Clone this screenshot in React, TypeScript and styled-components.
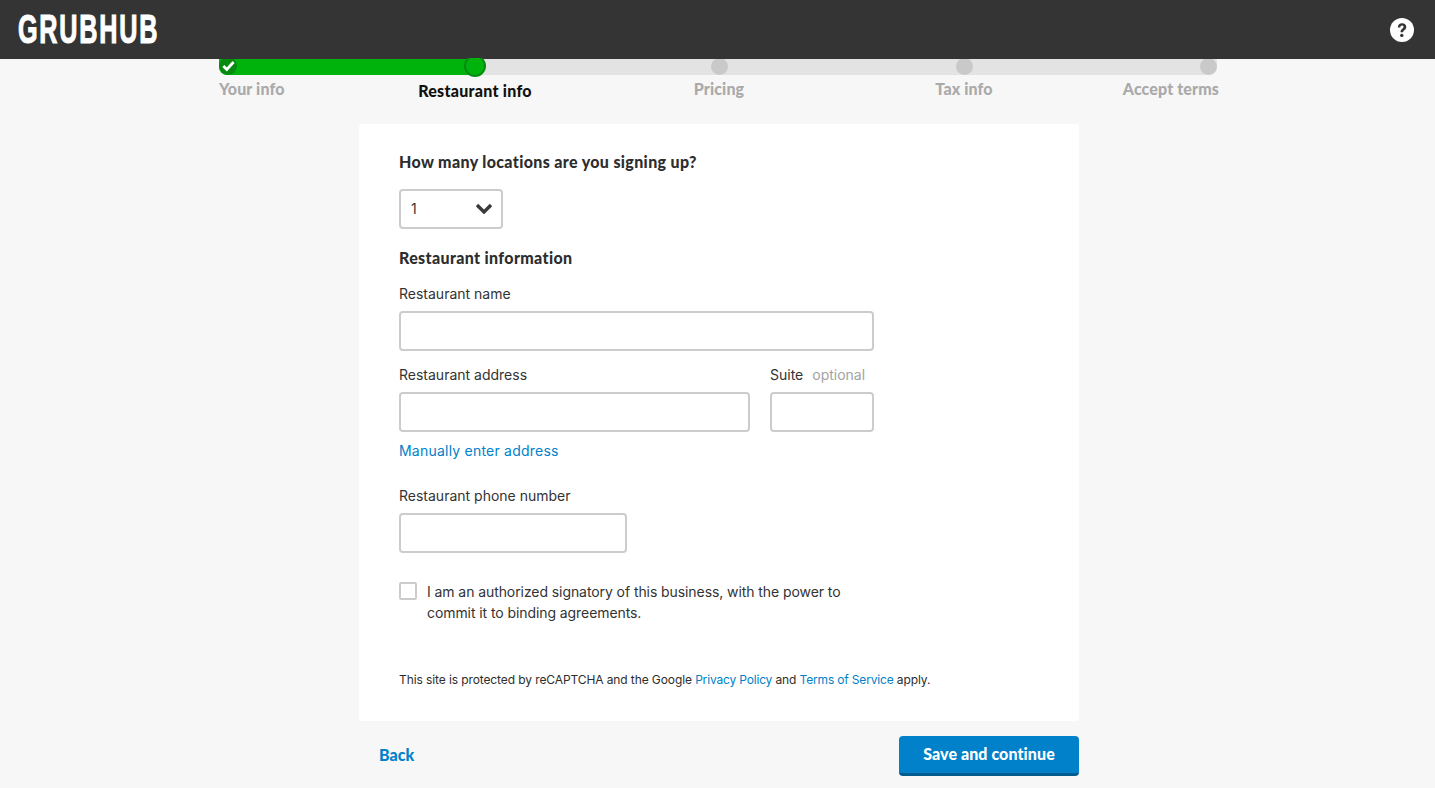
import React from "react";
import styled, { createGlobalStyle } from "styled-components";

const Global = createGlobalStyle`
  html, body { margin: 0; padding: 0; background: #f7f7f7; }
  body { font-family: Inter, "Liberation Sans", sans-serif; color: #333333; overflow: hidden; }
`;

const Page = styled.div`
  height: 788px;
  display: flex;
  flex-direction: column;
  align-items: center;
`;

const Header = styled.header`
  align-self: stretch;
  height: 59px;
  background: #343434;
  display: flex;
  align-items: center;
  justify-content: space-between;
  padding: 0 21px 0 18px;
`;

const Logo = styled.div`
  font-family: "Liberation Sans", sans-serif;
  font-weight: 700;
  font-size: 40px;
  line-height: 59px;
  color: #fff;
  letter-spacing: 2.8px;
  -webkit-text-stroke: 1.1px #fff;
  transform: scaleX(0.63);
  transform-origin: left center;
`;

const Stepper = styled.nav`
  position: relative;
  width: 1000px;
  margin-left: 3px;
  display: grid;
  grid-template-columns: 134px 244px 244px 246px 132px;
  height: 65px;
  &::before {
    content: "";
    position: absolute;
    left: 0;
    top: 0;
    width: 998px;
    height: 16px;
    background: #e3e3e3;
    border-radius: 0 0 8px 8px;
  }
`;

const Progress = styled.div`
  position: absolute;
  left: 0;
  top: 0;
  width: 256px;
  height: 16px;
  background: #00b30c;
  border-radius: 0 0 0 8px;
`;

const Step = styled.div<{ $align: "start" | "center" | "end" }>`
  position: relative;
  display: flex;
  flex-direction: column;
  align-items: ${(p) => (p.$align === "start" ? "flex-start" : p.$align === "end" ? "flex-end" : "center")};
`;

const Dot = styled.span<{ $state: "done" | "current" | "todo" }>`
  box-sizing: border-box;
  display: flex;
  align-items: center;
  justify-content: center;
  width: ${(p) => (p.$state === "done" ? 18 : p.$state === "current" ? 22 : 17)}px;
  height: ${(p) => (p.$state === "done" ? 18 : p.$state === "current" ? 22 : 17)}px;
  margin-top: ${(p) => (p.$state === "current" ? -4 : p.$state === "done" ? -2 : -1)}px;
  margin-bottom: ${(p) => (p.$state === "done" ? 1 : 0)}px;
  margin-right: ${(p) => (p.$state === "todo" ? "var(--dot-right, 0)" : "0")};
  border-radius: 50%;
  background: ${(p) => (p.$state === "done" ? "#068a10" : p.$state === "current" ? "#00b30c" : "#c9c9c9")};
  border: ${(p) => (p.$state === "current" ? "2px solid #078a12" : "none")};
  clip-path: inset(${(p) => (p.$state === "current" ? 3 : p.$state === "done" ? 2 : 1)}px -4px -4px -4px);
`;

const StepLabel = styled.span<{ $active?: boolean; $top: number }>`
  margin-top: ${(p) => p.$top}px;
  font-family: Lato, sans-serif;
  font-weight: 900;
  font-size: 16px;
  line-height: 20px;
  letter-spacing: ${(p) => (p.$active ? 0.27 : 0.12)}px;
  color: ${(p) => (p.$active ? "#111" : "#aaaaaa")};
  white-space: nowrap;
`;

const LastStep = styled(Step)`
  --dot-right: 2px;
`;

const Card = styled.main`
  box-sizing: border-box;
  width: 720px;
  height: 597px;
  margin-left: 3px;
  background: #fff;
  border-radius: 3px;
  padding: 27px 40px 0;
  display: flex;
  flex-direction: column;
  align-items: flex-start;
`;

const Heading = styled.h2<{ $top?: number }>`
  margin: ${(p) => p.$top ?? 0}px 0 0;
  font-family: Lato, sans-serif;
  font-weight: 900;
  font-size: 16px;
  line-height: 22px;
  letter-spacing: 0.35px;
  color: #2d2d2d;
`;

const SelectBox = styled.div`
  box-sizing: border-box;
  width: 104px;
  height: 40px;
  margin-top: 16px;
  border: 2px solid #cccccc;
  border-radius: 4px;
  padding: 0 8px 2px 10px;
  display: flex;
  align-items: center;
  justify-content: space-between;
  font-size: 14px;
`;

const Row = styled.div`
  display: flex;
  gap: 20px;
`;

const Field = styled.div<{ $width: number; $top: number }>`
  width: ${(p) => p.$width}px;
  margin-top: ${(p) => p.$top}px;
`;

const Label = styled.label`
  display: block;
  font-size: 14px;
  line-height: 20px;
  margin-bottom: 7px;
  color: #333333;
  white-space: nowrap;
`;

const Optional = styled.span`
  margin-left: 9px;
  color: #a3a3a3;
`;

const Input = styled.input`
  display: block;
  box-sizing: border-box;
  width: 100%;
  height: 40px;
  border: 2px solid #cccccc;
  border-radius: 4px;
  background: #fff;
  outline: none;
`;

const TextLink = styled.a`
  color: #0081c9;
  text-decoration: none;
`;

const ManualLink = styled(TextLink)`
  margin-top: 9px;
  font-size: 14px;
  line-height: 20px;
  letter-spacing: 0.22px;
`;

const Consent = styled.label`
  display: flex;
  gap: 10px;
  width: 450px;
  margin-top: 28px;
  font-size: 14px;
  line-height: 21px;
  letter-spacing: -0.08px;
`;

const CheckBox = styled.span`
  flex: none;
  box-sizing: border-box;
  width: 18px;
  height: 18px;
  margin-top: 1px;
  border: 2px solid #cccccc;
  border-radius: 2px;
`;

const Legal = styled.p`
  margin: 49px 0 0;
  font-size: 12px;
  line-height: 16px;
  letter-spacing: -0.1px;
  color: #2d2d2d;
`;

const LegalLink = styled(TextLink)`
  letter-spacing: -0.17px;
`;

const Footer = styled.footer`
  box-sizing: border-box;
  width: 720px;
  margin: 15px 0 0 3px;
  padding-left: 20px;
  display: flex;
  align-items: flex-start;
  justify-content: space-between;
`;

const Back = styled(TextLink)`
  margin-top: 9px;
  font-family: Lato, sans-serif;
  font-weight: 900;
  font-size: 16px;
  line-height: 20px;
`;

const Save = styled.button`
  box-sizing: border-box;
  width: 180px;
  height: 40px;
  padding: 0 0 2px;
  border: none;
  border-bottom: 3px solid #005b8e;
  border-radius: 4px;
  background: #0081c9;
  color: #fff;
  font-family: Lato, sans-serif;
  font-weight: 900;
  font-size: 16px;
  letter-spacing: 0.08px;
`;

const Check = () => (
  <svg width="13" height="12" viewBox="0 0 13 12" fill="none" aria-hidden="true">
    <path d="M1.3 6 4.8 9.4 11.6 2" stroke="#fff" strokeWidth="2.8" />
  </svg>
);

const Chevron = () => (
  <svg width="18" height="11" viewBox="0 0 18 11" fill="none" aria-hidden="true">
    <path d="M2 2l7 7 7-7" stroke="#3a3a3a" strokeWidth="3.4" />
  </svg>
);

const Help = () => (
  <svg width="24" height="24" viewBox="0 0 24 24" aria-hidden="true">
    <circle cx="12" cy="12" r="12" fill="#fff" />
    <path d="M7.8 9.4c0-2.5 1.9-4.1 4.3-4.1 2.4 0 4.2 1.5 4.2 3.6 0 3-3.2 3-3.2 5.4h-2.6c0-3.5 3-3.5 3-5.3 0-.8-.6-1.4-1.5-1.4-1 0-1.6.7-1.6 1.8z" fill="#343434" />
    <circle cx="11.8" cy="17.4" r="1.7" fill="#343434" />
  </svg>
);

export default function App() {
  return (
    <Page>
      <Global />
      <Header>
        <Logo>GRUBHUB</Logo>
        <Help />
      </Header>
      <Stepper>
        <Progress />
        <Step $align="start">
          <Dot $state="done"><Check /></Dot>
          <StepLabel $top={3}>Your info</StepLabel>
        </Step>
        <Step $align="center">
          <Dot $state="current" />
          <StepLabel $active $top={4}>Restaurant info</StepLabel>
        </Step>
        <Step $align="center">
          <Dot $state="todo" />
          <StepLabel $top={4}>Pricing</StepLabel>
        </Step>
        <Step $align="center">
          <Dot $state="todo" />
          <StepLabel $top={4}>Tax info</StepLabel>
        </Step>
        <LastStep $align="end">
          <Dot $state="todo" />
          <StepLabel $top={4}>Accept terms</StepLabel>
        </LastStep>
      </Stepper>
      <Card>
        <Heading>How many locations are you signing up?</Heading>
        <SelectBox>1<Chevron /></SelectBox>
        <Heading $top={18}>Restaurant information</Heading>
        <Field $width={475} $top={15}>
          <Label>Restaurant name</Label>
          <Input />
        </Field>
        <Row>
          <Field $width={351} $top={14}>
            <Label>Restaurant address</Label>
            <Input />
          </Field>
          <Field $width={104} $top={14}>
            <Label>Suite<Optional>optional</Optional></Label>
            <Input />
          </Field>
        </Row>
        <ManualLink href="#">Manually enter address</ManualLink>
        <Field $width={228} $top={25}>
          <Label>Restaurant phone number</Label>
          <Input />
        </Field>
        <Consent>
          <CheckBox />
          <span>I am an authorized signatory of this business, with the power to commit it to binding agreements.</span>
        </Consent>
        <Legal>
          This site is protected by reCAPTCHA and the Google <LegalLink href="#">Privacy Policy</LegalLink> and <LegalLink href="#">Terms of Service</LegalLink> apply.
        </Legal>
      </Card>
      <Footer>
        <Back href="#">Back</Back>
        <Save>Save and continue</Save>
      </Footer>
    </Page>
  );
}
